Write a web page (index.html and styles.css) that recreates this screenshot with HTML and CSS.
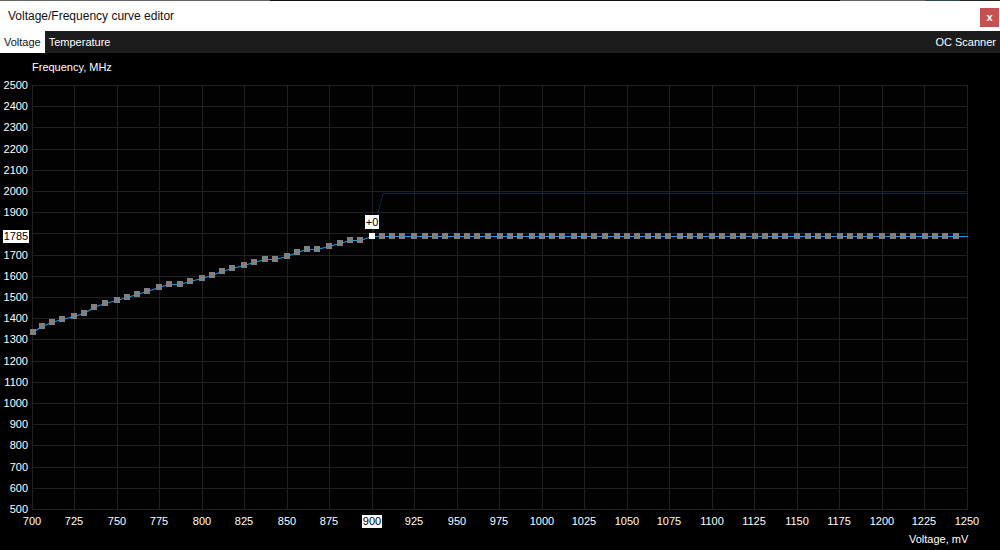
FILE: index.html
```html
<!DOCTYPE html>
<html lang="en">
<head>
    <meta charset="UTF-8">
    <title>Voltage/Frequency curve editor</title>
    <link rel="stylesheet" href="styles.css">
</head>
<body>
    <div class="window">
        <div class="desktop-strip"></div>
        <div class="title-bar">
            <span class="title">Voltage/Frequency curve editor</span>
            <button class="close-btn">x</button>
        </div>
        <div class="tab-bar">
            <div class="tab active">Voltage</div>
            <div class="tab">Temperature</div>
            <div class="tab scanner">OC Scanner</div>
        </div>
        <svg id="chart" class="chart" width="1000" height="497" viewBox="0 53 1000 497"></svg>
    </div>
    <script src="chart.js"></script>
</body>
</html>
```

FILE: styles.css
```css
html, body {
    margin: 0;
    padding: 0;
    background-color: #000;
    overflow: hidden;
}

.window {
    width: 1000px;
    height: 550px;
    display: flex;
    flex-direction: column;
    font-family: "Liberation Sans", Arial, sans-serif;
}

.desktop-strip {
    height: 1px;
    background: linear-gradient(to right, #666 0, #666 270px, #111 270px, #111 840px, #666 840px, #666 925px, #2f4a55 925px, #2f4a55 960px, #222 960px);
}

.title-bar {
    height: 30px;
    background-color: #fff;
    display: flex;
    align-items: center;
    justify-content: space-between;
    padding-left: 8px;
    padding-right: 1px;
}

.title {
    font-size: 12px;
    color: #111;
}

.close-btn {
    width: 19px;
    height: 19px;
    margin-top: 3px;
    padding: 0;
    border: none;
    background-color: #c75050;
    color: #fff;
    font-family: "Liberation Sans", sans-serif;
    font-size: 11px;
    font-weight: bold;
    line-height: 17px;
}

.tab-bar {
    height: 22px;
    background-color: #1c1c1c;
    display: flex;
    align-items: center;
}

.tab {
    height: 22px;
    line-height: 23px;
    padding: 0 4px;
    font-size: 11px;
    color: #fff;
}

.tab.active {
    background-color: #fff;
    color: #111;
}

.tab.scanner {
    margin-left: auto;
}

.chart {
    display: block;
}

.plot {
    fill: #020202;
}

.grid-line {
    stroke: #212121;
    stroke-width: 1;
}

.label {
    fill: #fff;
    font-size: 11px;
}

.label-dark {
    fill: #000;
    font-size: 11px;
}

.label-box {
    fill: #fff;
}

.offset-line {
    fill: none;
    stroke: #0b2a40;
    stroke-width: 1;
}

.curve {
    fill: none;
    stroke: #0a9df2;
    stroke-width: 1.2;
}

.point {
    fill: #808080;
}

.point.selected {
    fill: #fff;
}
```

FILE: chart.js
```js
const svg = document.getElementById('chart');

function add(tag, attrs, text) {
    const el = document.createElementNS('http://www.w3.org/2000/svg', tag);
    for (const key in attrs) el.setAttribute(key, attrs[key]);
    if (text !== undefined) el.textContent = text;
    svg.appendChild(el);
    return el;
}

add('rect', { class: 'plot', x: 32, y: 85, width: 936, height: 425 });

// grid + axis labels
for (let i = 0; i <= 22; i++) {
    const x = Math.floor(32 + i * 42.5);
    add('line', { class: 'grid-line', x1: x + 0.5, x2: x + 0.5, y1: 85, y2: 510 });
    const mv = 700 + i * 25;
    if (mv !== 900) {
        add('text', { class: 'label', x: x, y: 525, 'text-anchor': 'middle' }, mv);
    }
}

for (let i = 0; i <= 20; i++) {
    const y = Math.floor(85.4 + i * 21.2);
    add('line', { class: 'grid-line', x1: 32, x2: 968, y1: y + 0.5, y2: y + 0.5 });
    const mhz = 2500 - i * 100;
    if (mhz !== 1800) {
        add('text', { class: 'label', x: 28, y: y + 4, 'text-anchor': 'end' }, mhz);
    }
}

add('text', { class: 'label', x: 32, y: 71 }, 'Frequency, MHz');
add('text', { class: 'label', x: 909, y: 543 }, 'Voltage, mV');

// curve points, x and y in pixels
const rising = [
    [33, 332], [42, 326], [52, 322], [62, 319], [74, 316], [84, 313], [94, 307], [105, 303], [117, 300],
    [127, 297], [137, 294], [147, 291], [159, 287], [169, 284], [180, 284], [190, 281], [202, 278],
    [212, 275], [222, 271], [232, 268], [244, 265], [254, 262], [265, 259], [275, 259], [287, 256],
    [297, 252], [307, 249], [317, 249], [329, 246], [340, 243], [350, 240], [360, 240], [372, 236]
];
const flat = [
    382, 392, 402, 414, 425, 435, 445, 457, 467, 477, 488, 500, 510, 520, 532, 542, 552, 562,
    574, 584, 594, 605, 617, 627, 637, 648, 658, 668, 680, 690, 700, 712, 722, 733, 743, 755,
    765, 775, 785, 797, 808, 818, 828, 840, 850, 860, 870, 882, 893, 903, 913, 925, 935, 945, 956
];
const selected = rising.length - 1;
const points = rising.concat(flat.map(x => [x, 236]));

add('polyline', { class: 'offset-line', points: '372,236 383,193.5 967,193.5' });

const line = points.map(p => p[0] + ',' + (p[1] + 0.5)).join(' ');
add('polyline', { class: 'curve', points: '32,333 ' + line + ' 968,236.5' });

points.forEach((p, i) => {
    add('rect', {
        class: i === selected ? 'point selected' : 'point',
        x: p[0] - 3, y: p[1] - 3, width: 6, height: 6
    });
});

// value tags
add('rect', { class: 'label-box', x: 3, y: 230, width: 26, height: 13 });
add('text', { class: 'label-dark', x: 16, y: 240, 'text-anchor': 'middle' }, 1785);
add('rect', { class: 'label-box', x: 362, y: 515, width: 20, height: 13 });
add('text', { class: 'label-dark', x: 372, y: 525, 'text-anchor': 'middle' }, 900);
add('rect', { class: 'label-box', x: 365, y: 215, width: 14, height: 14 });
add('text', { class: 'label-dark', x: 372, y: 226, 'text-anchor': 'middle' }, '+0');
```
